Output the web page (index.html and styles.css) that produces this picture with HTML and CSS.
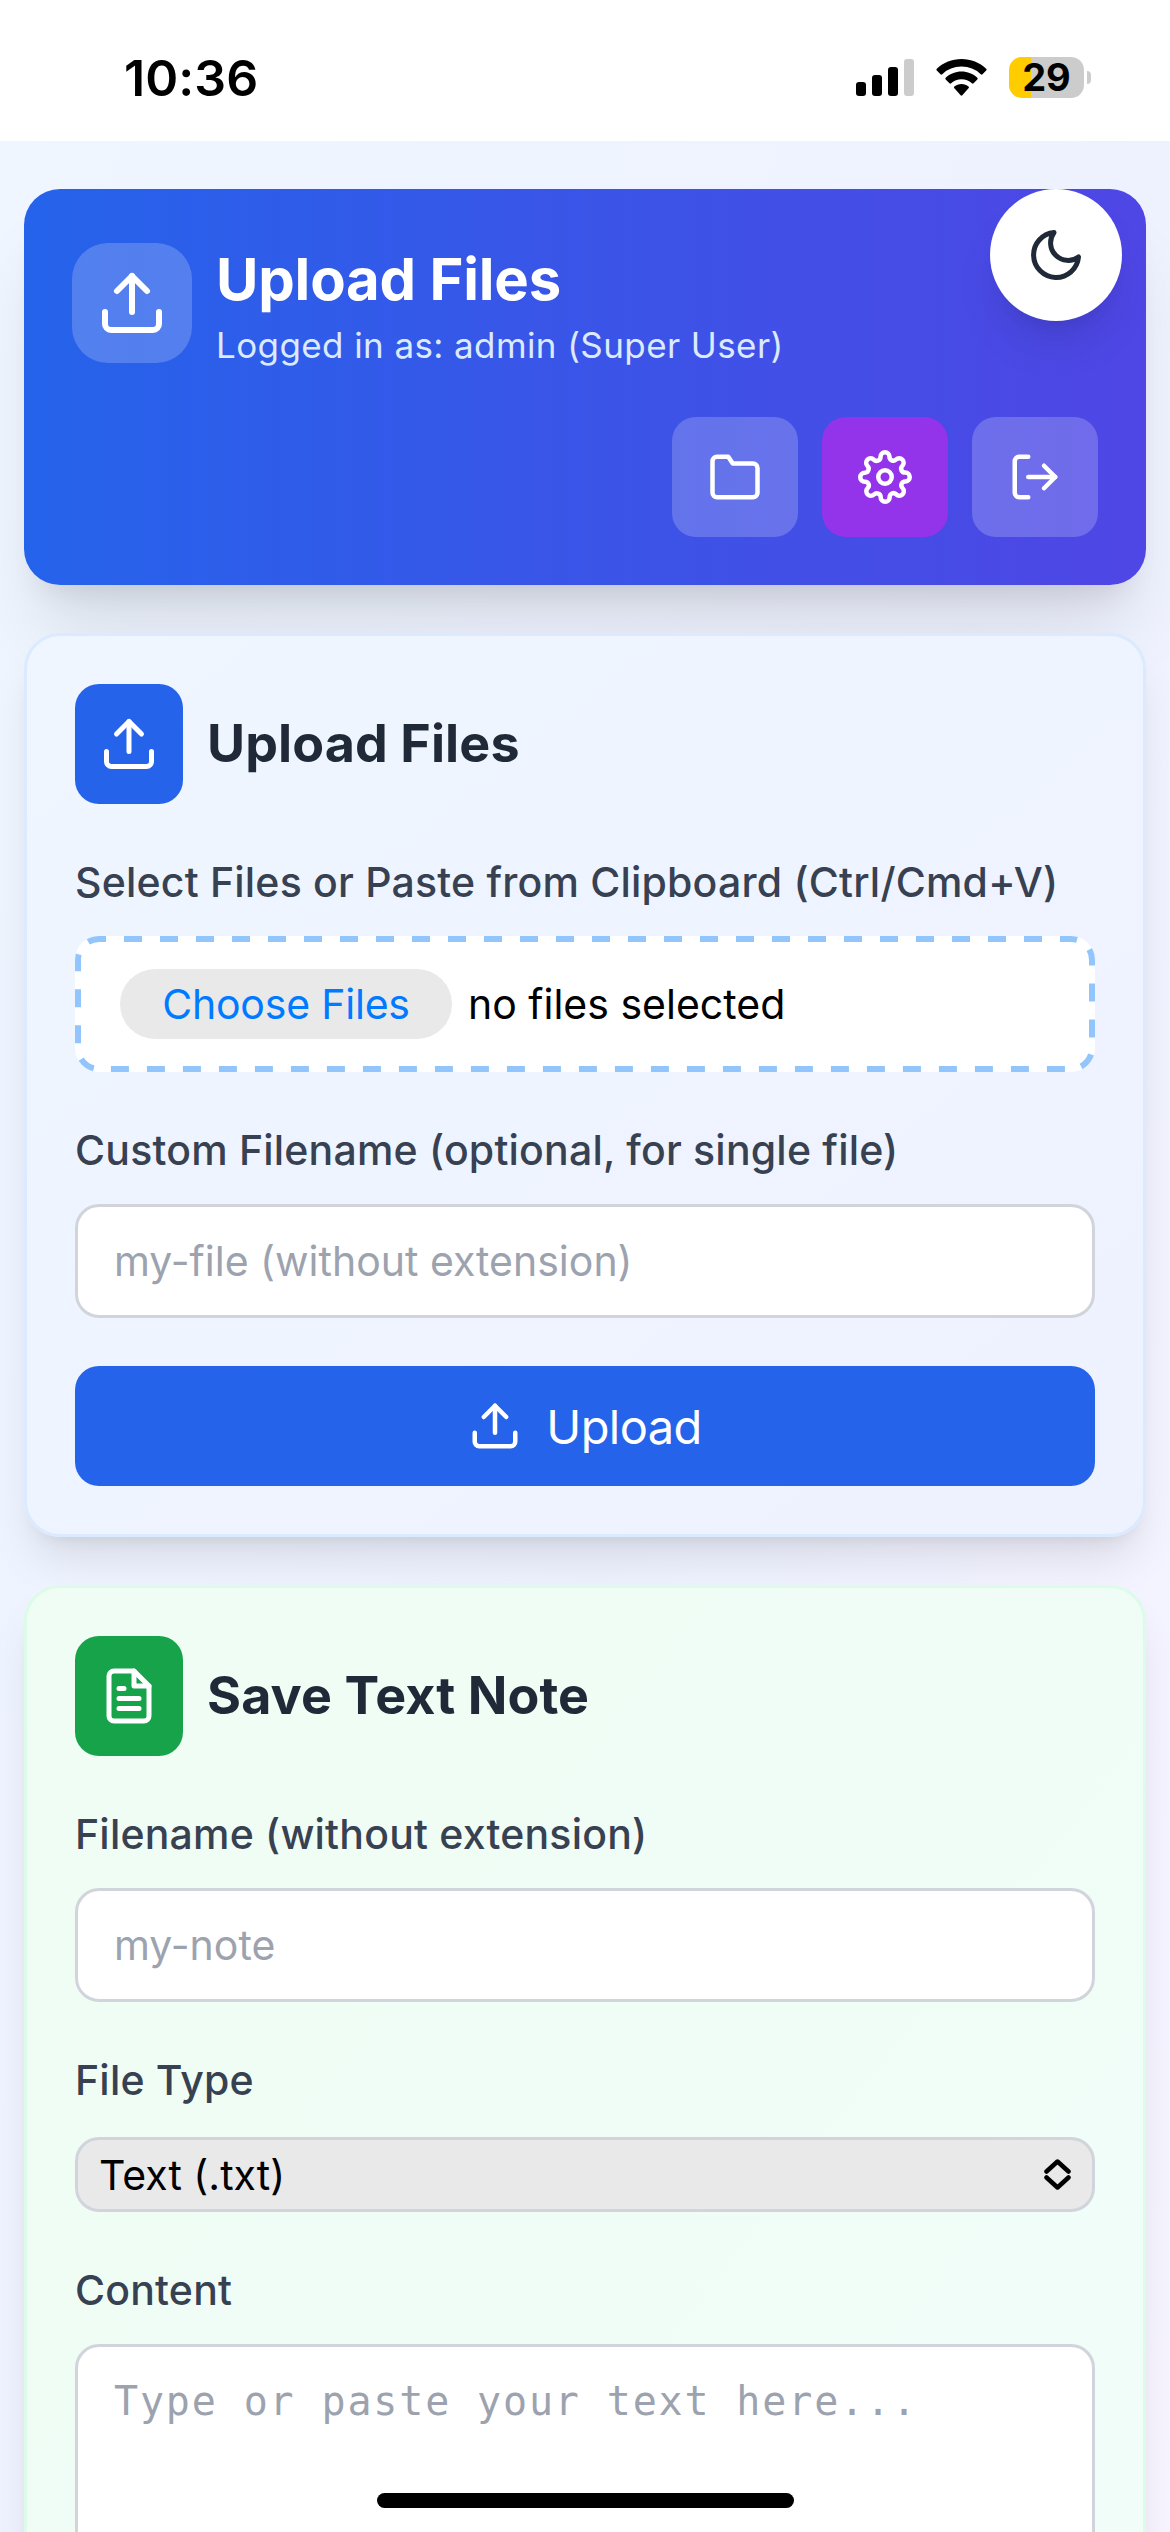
FILE: index.html
```html
<!DOCTYPE html>
<html lang="en">

<head>
    <meta charset="UTF-8">
    <meta name="viewport" content="width=device-width, initial-scale=1.0">
    <title>Upload Files</title>
    <link rel="stylesheet" href="styles.css">
</head>

<body>
    <div class="status-bar">
        <span class="time">10:36</span>
        <div class="status-icons">
            <svg class="signal" viewBox="0 0 58 37">
                <rect x="0" y="23" width="10" height="14" rx="3" />
                <rect x="16" y="16" width="10" height="21" rx="3" />
                <rect x="32" y="8" width="10" height="29" rx="3" />
                <rect class="dim" x="48" y="0" width="10" height="37" rx="3" />
            </svg>
            <svg class="wifi" viewBox="0 0 51 37">
                <path d="M25.500 0C35 0 43.700 3.600 50.200 9.700a1.200 1.200 0 0 1 0 1.700l-3.700 3.800a1.200 1.200 0 0 1-1.700 0A28 28 0 0 0 25.500 7.600 28 28 0 0 0 6.200 15.200a1.200 1.200 0 0 1-1.700 0L.8 11.400a1.200 1.200 0 0 1 0-1.700C7.300 3.600 16 0 25.500 0z" />
                <path d="M25.500 12.500c6 0 11.600 2.300 15.800 6.200a1.200 1.200 0 0 1 0 1.700l-3.700 3.800a1.200 1.200 0 0 1-1.700 0 15.500 15.500 0 0 0-20.800 0 1.200 1.200 0 0 1-1.700 0l-3.700-3.800a1.200 1.200 0 0 1 0-1.700c4.200-3.900 9.800-6.200 15.800-6.200z" />
                <path d="M25.500 25c2.700 0 5.200 1 7 2.600a1.200 1.200 0 0 1 0 1.700l-6.200 6.900a1.200 1.200 0 0 1-1.700 0l-6.200-6.900a1.200 1.200 0 0 1 0-1.700c1.900-1.600 4.400-2.600 7.100-2.600z" />
            </svg>
            <div class="battery"><span>29</span></div>
        </div>
    </div>

    <main class="page">
        <header class="header">
            <button class="theme-toggle">
                <svg class="icon icon-60" viewBox="0 0 24 24">
                    <path d="M21 12.790A9 9 0 1 1 11.210 3 7 7 0 0 0 21 12.790z" />
                </svg>
            </button>

            <div class="brand">
                <div class="brand-icon">
                    <svg class="icon icon-72" viewBox="0 0 24 24">
                        <path d="M21 15v4a2 2 0 0 1-2 2H5a2 2 0 0 1-2-2v-4" />
                        <polyline points="17 8 12 3 7 8" />
                        <line x1="12" y1="3" x2="12" y2="15" />
                    </svg>
                </div>
                <div>
                    <h1>Upload Files</h1>
                    <p class="user">Logged in as: admin (Super User)</p>
                </div>
            </div>

            <div class="actions">
                <button class="action">
                    <svg class="icon icon-54" viewBox="0 0 24 24">
                        <path d="M22 19a2 2 0 0 1-2 2H4a2 2 0 0 1-2-2V5a2 2 0 0 1 2-2h5l2 3h9a2 2 0 0 1 2 2z" />
                    </svg>
                </button>
                <button class="action purple">
                    <svg class="icon icon-54" viewBox="0 0 24 24">
                        <circle cx="12" cy="12" r="3" />
                        <path d="M19.400 15a1.650 1.650 0 0 0 .33 1.820l.06.06a2 2 0 0 1 0 2.830 2 2 0 0 1-2.830 0l-.06-.06a1.650 1.650 0 0 0-1.820-.33 1.650 1.650 0 0 0-1 1.510V21a2 2 0 0 1-2 2 2 2 0 0 1-2-2v-.09A1.650 1.650 0 0 0 9 19.400a1.650 1.650 0 0 0-1.820.33l-.06.06a2 2 0 0 1-2.830 0 2 2 0 0 1 0-2.830l.06-.06a1.650 1.650 0 0 0 .33-1.820 1.650 1.650 0 0 0-1.510-1H3a2 2 0 0 1-2-2 2 2 0 0 1 2-2h.09A1.650 1.650 0 0 0 4.600 9a1.650 1.650 0 0 0-.33-1.820l-.06-.06a2 2 0 0 1 0-2.830 2 2 0 0 1 2.830 0l.06.06a1.650 1.650 0 0 0 1.820.33H9a1.650 1.650 0 0 0 1-1.510V3a2 2 0 0 1 2-2 2 2 0 0 1 2 2v.09a1.650 1.650 0 0 0 1 1.510 1.650 1.650 0 0 0 1.820-.33l.06-.06a2 2 0 0 1 2.830 0 2 2 0 0 1 0 2.830l-.06.06a1.650 1.650 0 0 0-.33 1.820V9a1.650 1.650 0 0 0 1.510 1H21a2 2 0 0 1 2 2 2 2 0 0 1-2 2h-.09a1.650 1.650 0 0 0-1.510 1z" />
                    </svg>
                </button>
                <button class="action">
                    <svg class="icon icon-54" viewBox="0 0 24 24">
                        <path d="M9 21H5a2 2 0 0 1-2-2V5a2 2 0 0 1 2-2h4" />
                        <polyline points="16 17 21 12 16 7" />
                        <line x1="21" y1="12" x2="9" y2="12" />
                    </svg>
                </button>
            </div>
        </header>

        <!-- Upload -->
        <section class="card blue">
            <div class="card-title">
                <div class="card-icon">
                    <svg class="icon icon-60" viewBox="0 0 24 24">
                        <path d="M21 15v4a2 2 0 0 1-2 2H5a2 2 0 0 1-2-2v-4" />
                        <polyline points="17 8 12 3 7 8" />
                        <line x1="12" y1="3" x2="12" y2="15" />
                    </svg>
                </div>
                <h2>Upload Files</h2>
            </div>

            <label>Select Files or Paste from Clipboard (Ctrl/Cmd+V)</label>
            <div class="file-input">
                <svg class="dashes" viewBox="0 0 1020 136">
                    <rect width="1020" height="136" rx="24" />
                </svg>
                <button class="choose">Choose Files</button>
                <span class="no-files">no files selected</span>
            </div>

            <label for="custom-name">Custom Filename (optional, for single file)</label>
            <input type="text" id="custom-name" placeholder="my-file (without extension)">

            <button class="upload-btn">
                <svg class="icon icon-54" viewBox="0 0 24 24">
                    <path d="M21 15v4a2 2 0 0 1-2 2H5a2 2 0 0 1-2-2v-4" />
                    <polyline points="17 8 12 3 7 8" />
                    <line x1="12" y1="3" x2="12" y2="15" />
                </svg>
                <span>Upload</span>
            </button>
        </section>

        <!-- Text note -->
        <section class="card green">
            <div class="card-title">
                <div class="card-icon">
                    <svg class="icon icon-60" viewBox="0 0 24 24">
                        <path d="M14 2H6a2 2 0 0 0-2 2v16a2 2 0 0 0 2 2h12a2 2 0 0 0 2-2V8z" />
                        <polyline points="14 2 14 8 20 8" />
                        <line x1="16" y1="13" x2="8" y2="13" />
                        <line x1="16" y1="17" x2="8" y2="17" />
                        <polyline points="10 9 9 9 8 9" />
                    </svg>
                </div>
                <h2>Save Text Note</h2>
            </div>

            <label for="note-name">Filename (without extension)</label>
            <input type="text" id="note-name" placeholder="my-note">

            <label>File Type</label>
            <div class="select">
                <span>Text (.txt)</span>
                <svg class="chevrons" viewBox="0 0 27 31">
                    <polyline points="2.500 12.500 13.500 2.500 24.500 12.500" />
                    <polyline points="2.500 18.500 13.500 28.500 24.500 18.500" />
                </svg>
            </div>

            <label for="content">Content</label>
            <textarea id="content" placeholder="Type or paste your text here..."></textarea>
        </section>
    </main>

    <div class="home-bar"></div>
</body>

</html>
```
FILE: styles.css
```css
* {
    box-sizing: border-box;
    margin: 0;
}

body {
    height: 2532px;
    overflow: hidden;
    background-color: #fff;
    font-family: Inter, "Liberation Sans", sans-serif;
}

button, input, textarea {
    font-family: inherit;
    border: none;
    padding: 0;
}

/* status bar */
.status-bar {
    height: 141px;
    padding: 14px 79px 0 124px;
    display: flex;
    align-items: center;
    justify-content: space-between;
    background-color: #fff;
}

.time {
    font-size: 50px;
    font-weight: 600;
    letter-spacing: 0.1px;
}

.status-icons {
    display: flex;
    align-items: center;
    gap: 22px;
}

.signal {
    width: 58px;
    height: 37px;
}

.signal .dim {
    fill: #ccc;
}

.wifi {
    width: 51px;
    height: 37px;
}

.battery {
    position: relative;
    width: 75px;
    height: 41px;
    margin-right: 7px;
    border-radius: 13px;
    background: linear-gradient(to right, #fc0 22px, #ccc 22px);
    font-size: 38px;
    font-weight: 700;
    line-height: 41px;
    text-align: center;
}

.battery::after {
    content: "";
    position: absolute;
    right: -7px;
    top: 14px;
    width: 4px;
    height: 13px;
    border-radius: 0 4px 4px 0;
    background-color: #ccc;
}

.page {
    padding: 48px 24px;
    background: linear-gradient(to bottom right, #eff6ff, #eef2ff, #faf5ff);
}

.icon {
    display: block;
    flex: none;
    fill: none;
    stroke: currentColor;
    stroke-width: 2;
    stroke-linecap: round;
    stroke-linejoin: round;
}

.icon-54 {
    width: 54px;
    height: 54px;
}

.icon-60 {
    width: 60px;
    height: 60px;
}

.icon-72 {
    width: 72px;
    height: 72px;
}

/* header */
.header {
    position: relative;
    padding: 48px;
    margin-bottom: 48px;
    border-radius: 36px;
    color: #fff;
    background: linear-gradient(to right, #2563eb, #4f46e5);
    box-shadow: 0 60px 75px -15px rgba(0, 0, 0, 0.1), 0 24px 30px -18px rgba(0, 0, 0, 0.1);
}

.theme-toggle {
    position: absolute;
    top: 0;
    right: 24px;
    width: 132px;
    height: 132px;
    display: flex;
    align-items: center;
    justify-content: center;
    border-radius: 50%;
    color: #1f2937;
    background-color: #fff;
    box-shadow: 0 30px 45px -9px rgba(0, 0, 0, 0.1), 0 12px 18px -12px rgba(0, 0, 0, 0.1);
}

.brand {
    display: flex;
    align-items: center;
    gap: 24px;
}

.brand-icon {
    width: 120px;
    height: 120px;
    display: flex;
    align-items: center;
    justify-content: center;
    border-radius: 36px;
    background-color: rgba(255, 255, 255, 0.2);
}

h1 {
    font-size: 58px;
    line-height: 84px;
    font-weight: 700;
    letter-spacing: -0.2px;
}

.user {
    font-size: 35px;
    line-height: 48px;
    letter-spacing: 0.4px;
    color: #dbeafe;
}

.actions {
    display: flex;
    justify-content: flex-end;
    gap: 24px;
    margin-top: 48px;
}

.action {
    width: 126px;
    height: 120px;
    display: flex;
    align-items: center;
    justify-content: center;
    border-radius: 24px;
    color: #fff;
    background-color: rgba(255, 255, 255, 0.2);
}

.action.purple {
    background-color: #9333ea;
}

/* cards */
.card {
    position: relative;
    padding: 48px;
    margin-bottom: 48px;
    border: 3px solid;
    border-radius: 36px;
    box-shadow: 0 30px 45px -9px rgba(0, 0, 0, 0.1), 0 12px 18px -12px rgba(0, 0, 0, 0.1);
}

.card.blue {
    border-color: #dbeafe;
    background: linear-gradient(to bottom right, #eff6ff, #eef2ff);
}

.card.green {
    border-color: #dcfce7;
    background: linear-gradient(to bottom right, #f0fdf4, #f0fdfa);
}

.card-title {
    display: flex;
    align-items: center;
    gap: 24px;
    margin-bottom: 48px;
}

.card-icon {
    width: 108px;
    height: 120px;
    display: flex;
    align-items: center;
    justify-content: center;
    border-radius: 24px;
    color: #fff;
    background-color: #2563eb;
}

.green .card-icon {
    background-color: #16a34a;
}

h2 {
    font-size: 52px;
    line-height: 84px;
    font-weight: 700;
    letter-spacing: 0.1px;
    color: #1f2937;
}

label {
    display: block;
    margin-bottom: 24px;
    font-size: 41px;
    line-height: 60px;
    font-weight: 500;
    letter-spacing: 0.2px;
    color: #374151;
}

.file-input {
    position: relative;
    display: flex;
    align-items: center;
    height: 136px;
    padding: 0 45px;
    margin-bottom: 48px;
    border-radius: 24px;
    overflow: hidden;
    background-color: #fff;
    font-size: 41px;
}

/* dashes run on the outer edge, the outer half is clipped away */
.dashes {
    position: absolute;
    inset: 0;
    fill: none;
    stroke: #93c5fd;
    stroke-width: 12;
    stroke-dasharray: 18 18;
    stroke-dashoffset: 11;
}

.choose {
    width: 332px;
    height: 70px;
    border-radius: 35px;
    font-size: 41px;
    letter-spacing: -0.2px;
    color: #007aff;
    background-color: #e9e9e9;
}

.no-files {
    margin-left: 16px;
    color: #000;
}

input {
    display: block;
    width: 100%;
    height: 114px;
    padding: 0 36px;
    margin-bottom: 48px;
    border: 3px solid #d1d5db;
    border-radius: 24px;
    font-size: 41px;
    background-color: #fff;
}

input::placeholder, textarea::placeholder {
    color: #9ca3af;
}

.upload-btn {
    display: flex;
    align-items: center;
    justify-content: center;
    gap: 24px;
    width: 100%;
    height: 120px;
    border-radius: 24px;
    font-size: 47px;
    letter-spacing: -0.6px;
    color: #fff;
    background-color: #2563eb;
}

.select {
    display: flex;
    align-items: center;
    justify-content: space-between;
    height: 75px;
    margin: 27px 0 48px;
    padding: 0 21px;
    border: 3px solid #d1d5db;
    border-radius: 24px;
    font-size: 41px;
    color: #000;
    background-color: #e9e9e9;
}

.chevrons {
    width: 27px;
    height: 31px;
    fill: none;
    stroke: #000;
    stroke-width: 4.5;
    stroke-linecap: round;
    stroke-linejoin: round;
}

textarea {
    display: block;
    width: 100%;
    height: 600px;
    padding: 24px 36px;
    border: 3px solid #d1d5db;
    border-radius: 24px;
    resize: none;
    font-family: "DejaVu Sans Mono", monospace;
    font-size: 40px;
    line-height: 60px;
    letter-spacing: 1.85px;
    background-color: #fff;
}

.home-bar {
    position: fixed;
    left: 377px;
    bottom: 24px;
    width: 417px;
    height: 15px;
    border-radius: 8px;
    background-color: #000;
}
```
